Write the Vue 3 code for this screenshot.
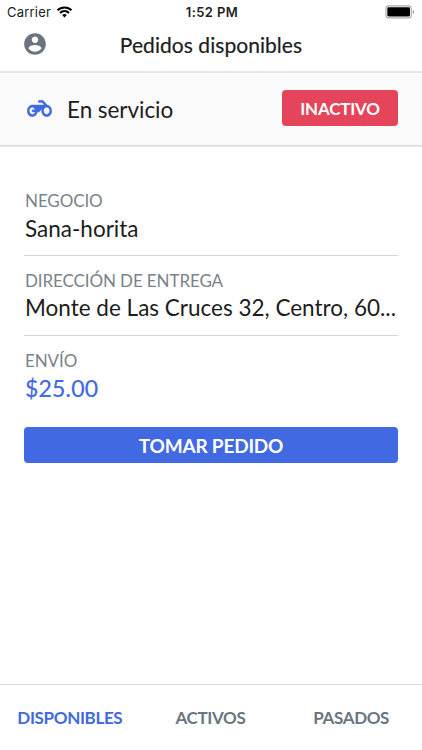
<script setup>
const fields = [
  { label: 'NEGOCIO', value: 'Sana-horita', key: 'business' },
  { label: 'DIRECCIÓN DE ENTREGA', value: 'Monte de Las Cruces 32, Centro, 60...', key: 'address' },
  { label: 'ENVÍO', value: '$25.00', key: 'price' },
]
const tabs = [
  { label: 'DISPONIBLES', active: true },
  { label: 'ACTIVOS', active: false },
  { label: 'PASADOS', active: false },
]
</script>

<template>
  <div class="screen">
    <div class="status">
      <div class="carrier">
        <span>Carrier</span>
        <svg class="wifi" viewBox="0 0 16 12">
          <path d="M1 4.3a10 10 0 0 1 14 0" />
          <path d="M3.5 6.9a6.4 6.4 0 0 1 9 0" />
          <path class="dot" d="M8 11.6 5.6 9.1a3.4 3.4 0 0 1 4.8 0z" />
        </svg>
      </div>
      <span class="time">1:52 PM</span>
      <div class="battery-wrap">
        <svg class="battery" viewBox="0 0 30 14">
          <rect x=".9" y=".9" width="25.4" height="12" rx="3" fill="#fff" stroke="#aaa" stroke-width="1.1" />
          <rect x="2.3" y="2.3" width="22.7" height="9.2" rx="1.4" fill="#000" />
          <path d="M27.8 4.9c1.8.5 1.8 3.5 0 4z" fill="#999" />
        </svg>
      </div>
    </div>
    <header class="header">
      <svg class="account" viewBox="0 0 24 24">
        <path d="M12 2C6.48 2 2 6.48 2 12s4.480 10 10 10 10-4.480 10-10S17.520 2 12 2zm0 3c1.660 0 3 1.340 3 3s-1.340 3-3 3-3-1.340-3-3 1.340-3 3-3zm0 14.200c-2.500 0-4.710-1.280-6-3.220.030-1.990 4-3.080 6-3.080 1.990 0 5.970 1.090 6 3.080-1.290 1.940-3.500 3.220-6 3.220z" />
      </svg>
      <h1 class="title">Pedidos disponibles</h1>
    </header>
    <section class="service">
      <svg class="moto" viewBox="-0.2 4.800 24.400 14.400" preserveAspectRatio="none">
        <path d="M19.440 9.030L15.410 5H11v2h3.590l2 2H5c-2.800 0-5 2.200-5 5s2.200 5 5 5c2.460 0 4.450-1.690 4.900-4h1.650l2.770-2.770c-.210.540-.320 1.140-.320 1.770 0 2.800 2.200 5 5 5s5-2.200 5-5c0-2.650-1.970-4.770-4.560-4.970zM7.820 15C7.400 16.150 6.280 17 5 17c-1.630 0-3-1.370-3-3s1.370-3 3-3c1.280 0 2.400.850 2.820 2H5v2h2.820zM19 17c-1.660 0-3-1.340-3-3s1.340-3 3-3 3 1.340 3 3-1.340 3-3 3z" />
      </svg>
      <span class="service-text">En servicio</span>
      <button class="inactive">INACTIVO</button>
    </section>
    <main class="content">
      <div v-for="f in fields" :key="f.key" class="field" :class="f.key">
        <div class="label">{{ f.label }}</div>
        <div class="value">{{ f.value }}</div>
      </div>
      <button class="take">TOMAR PEDIDO</button>
    </main>
    <nav class="tabs">
      <span v-for="t in tabs" :key="t.label" class="tab" :class="{ active: t.active }">{{ t.label }}</span>
    </nav>
  </div>
</template>

<style>
body {
  margin: 0;
  background: #fff;
}
</style>

<style scoped>
.screen {
  width: 422px;
  height: 750px;
  display: flex;
  flex-direction: column;
  overflow: hidden;
  background: #fff;
  color: #1b1d20;
  font-family: Lato, "Liberation Sans", sans-serif;
}
.status {
  height: 24px;
  flex: none;
  display: grid;
  grid-template-columns: 1fr auto 1fr;
  align-items: center;
  padding: 0 6px 0 7px;
  font-family: Inter, "Liberation Sans", sans-serif;
  font-size: 13px;
  color: #222;
}
.carrier {
  display: flex;
  align-items: center;
  gap: 5px;
  letter-spacing: 0.2px;
}
.wifi {
  width: 17px;
  height: 12px;
  fill: none;
  stroke: #000;
  stroke-width: 2.1;
}
.wifi .dot {
  fill: #000;
  stroke: none;
}
.time {
  padding-left: 1px;
  font-weight: 600;
  letter-spacing: 0.4px;
}
.battery-wrap {
  display: flex;
  justify-content: flex-end;
}
.battery {
  width: 30px;
  height: 14px;
  margin-right: 1px;
}
.header {
  height: 49px;
  flex: none;
  display: grid;
  grid-template-columns: 60px 1fr 60px;
  border-bottom: 2px solid #e6e6e6;
  box-sizing: border-box;
}
.account {
  width: 26px;
  height: 26px;
  margin: 7px 0 0 22px;
  fill: #6b7580;
}
.title {
  margin: 0;
  text-align: center;
  font-size: 21px;
  line-height: 42px;
  font-weight: 400;
  letter-spacing: 0.05px;
  -webkit-text-stroke: 0.2px currentColor;
}
.service {
  height: 73px;
  flex: none;
  box-sizing: border-box;
  display: flex;
  align-items: center;
  padding: 0 24px 0 27px;
  background: #fafafa;
  border-bottom: 1px solid #dcdcdc;
  box-shadow: 0 1px 1px #ececec;
}
.moto {
  width: 25px;
  height: 17px;
  margin-top: -2px;
  fill: #4169e1;
  stroke: #4169e1;
  stroke-width: 0.35;
}
.service-text {
  flex: 1;
  padding: 1px 0 0 15px;
  font-size: 22.5px;
  letter-spacing: -0.05px;
}
button {
  display: block;
  height: 36px;
  padding: 0;
  border: 0;
  border-radius: 4px;
  color: #fff;
  font-family: inherit;
  font-weight: 700;
}
.inactive {
  width: 116px;
  margin-bottom: 2px;
  background: #e4455a;
  font-size: 17px;
  letter-spacing: -0.2px;
}
.content {
  flex: 1;
  padding: 40px 24px 0;
}
.field {
  height: 80px;
  box-sizing: border-box;
  padding: 10px 0 0 1px;
  border-bottom: 1px solid #d5d5d5;
  white-space: nowrap;
}
.business {
  height: 70px;
  padding-top: 0;
}
.price {
  border: 0;
}
.label {
  font-size: 17px;
  line-height: 30px;
  letter-spacing: -0.1px;
  color: #7a828a;
}
.value {
  font-size: 22.5px;
  line-height: 26px;
}
.address .value,
.price .value {
  margin-top: -1px;
}
.price .value {
  font-size: 23px;
  letter-spacing: 0.2px;
  color: #4169e1;
  -webkit-text-stroke: 0.2px currentColor;
}
.take {
  width: 100%;
  margin-top: 11px;
  background: #4169e1;
  font-size: 19px;
  letter-spacing: -0.2px;
}
.tabs {
  height: 66px;
  flex: none;
  box-sizing: border-box;
  border-top: 1px solid #dedede;
  display: grid;
  grid-template-columns: repeat(3, 1fr);
  text-align: center;
}
.tab {
  padding-right: 1px;
  font-size: 17px;
  line-height: 66px;
  font-weight: 700;
  letter-spacing: -0.35px;
  color: #6b7580;
}
.tab.active {
  color: #4169e1;
}
</style>
